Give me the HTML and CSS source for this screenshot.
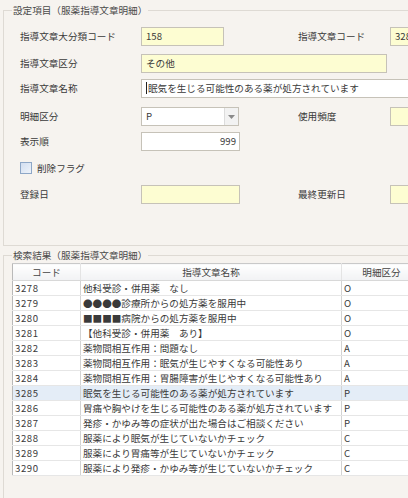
FILE: index.html
```html
<!DOCTYPE html>
<html lang="ja">
<head>
<meta charset="utf-8">
<link rel="stylesheet" href="styles.css">
</head>
<body>
<fieldset class="group group-detail">
  <legend>設定項目（服薬指導文章明細）</legend>
  <div class="form">
    <div class="lbl r1">指導文章大分類コード</div>
    <div class="tb ro w83 r1">158</div>
    <div class="lbl r1">指導文章コード</div>
    <div class="tb ro wide r1">3285</div>

    <div class="lbl r2">指導文章区分</div>
    <div class="tb ro w246 span r2">その他</div>

    <div class="lbl r3">指導文章名称</div>
    <div class="tb w280 span r3"><span class="caret"></span>眠気を生じる可能性のある薬が処方されています</div>

    <div class="lbl r4">明細区分</div>
    <div class="combo r4"><span class="combo-text">P</span><span class="combo-btn"><svg width="7" height="4" viewBox="0 0 7 4"><path d="M0 0H7L3.5 4Z" fill="#8a8a8a"/></svg></span></div>
    <div class="lbl r4">使用頻度</div>
    <div class="tb ro wide r4"></div>

    <div class="lbl r5">表示順</div>
    <div class="tb w99 num r5">999</div>

    <label class="chk r6"><span class="box"></span>削除フラグ</label>

    <div class="lbl r7">登録日</div>
    <div class="tb ro w99 r7"></div>
    <div class="lbl r7">最終更新日</div>
    <div class="tb ro wide r7"></div>
  </div>
</fieldset>

<fieldset class="group group-result">
  <legend>検索結果（服薬指導文章明細）</legend>
  <table class="grid">
    <colgroup><col class="c1"><col class="c2"><col class="c3"></colgroup>
    <thead>
      <tr><th>コード</th><th>指導文章名称</th><th>明細区分</th></tr>
    </thead>
    <tbody>
      <tr><td>3278</td><td>他科受診・併用薬　なし</td><td>O</td></tr>
      <tr><td>3279</td><td>●●●●診療所からの処方薬を服用中</td><td>O</td></tr>
      <tr><td>3280</td><td>■■■■病院からの処方薬を服用中</td><td>O</td></tr>
      <tr><td>3281</td><td>【他科受診・併用薬　あり】</td><td>O</td></tr>
      <tr><td>3282</td><td>薬物間相互作用：問題なし</td><td>A</td></tr>
      <tr><td>3283</td><td>薬物間相互作用：眠気が生じやすくなる可能性あり</td><td>A</td></tr>
      <tr><td>3284</td><td>薬物間相互作用：胃腸障害が生じやすくなる可能性あり</td><td>A</td></tr>
      <tr class="sel"><td>3285</td><td>眠気を生じる可能性のある薬が処方されています</td><td>P</td></tr>
      <tr><td>3286</td><td>胃痛や胸やけを生じる可能性のある薬が処方されています</td><td>P</td></tr>
      <tr><td>3287</td><td>発疹・かゆみ等の症状が出た場合はご相談ください</td><td>P</td></tr>
      <tr><td>3288</td><td>服薬により眠気が生じていないかチェック</td><td>C</td></tr>
      <tr><td>3289</td><td>服薬により胃痛等が生じていないかチェック</td><td>C</td></tr>
      <tr><td>3290</td><td>服薬により発疹・かゆみ等が生じていないかチェック</td><td>C</td></tr>
    </tbody>
  </table>
</fieldset>
</body>
</html>
```

FILE: styles.css
```css
html, body {
  margin: 0;
  padding: 0;
  width: 408px;
  height: 498px;
  overflow: hidden;
  background: #f6f3ef;
}
body {
  padding-top: 3px;
  box-sizing: border-box;
  font-family: "Noto Sans CJK JP", "Noto Sans", sans-serif;
  font-size: 9.6px;
  color: #3a3a3a;
}
.group {
  margin: 0 0 0 3px;
  padding: 0;
  border: 1px solid #dedad4;
  width: 430px;
  box-sizing: border-box;
  min-width: 0;
}
.group legend {
  margin-left: 8px;
  padding: 0 1px;
  height: 14px;
  line-height: 14px;
  color: #4a4a4a;
}
.group-detail {
  height: 243px;
}
.group-result {
  margin-top: 2px;
  height: 260px;
}
.form {
  display: grid;
  grid-template-columns: 121px 157px 92px 1fr;
  grid-template-rows: 27px 25px 28px 25px 26px 27px 19px;
  margin-top: 10px;
  padding-left: 16px;
}
.r1 { grid-row: 1; }
.r2 { grid-row: 2; }
.r3 { grid-row: 3; }
.r4 { grid-row: 4; }
.r5 { grid-row: 5; }
.r6 { grid-row: 6; }
.r7 { grid-row: 7; }
.lbl {
  height: 19px;
  line-height: 19px;
  white-space: nowrap;
}
.tb {
  height: 19px;
  box-sizing: border-box;
  border: 1px solid #c6c2b8;
  background: #fff;
  line-height: 17px;
  padding: 0 4px;
  white-space: nowrap;
  overflow: hidden;
}
.tb.ro { background: #fdfdd2; }
.w83 { width: 83px; }
.w99 { width: 99px; }
.w246 { width: 246px; }
.w280 { width: 280px; }
.wide { width: 60px; }
.span { grid-column: 2 / 5; }
.num { text-align: right; padding-right: 3px; }
.caret {
  display: inline-block;
  width: 1px;
  height: 12px;
  background: #222;
  vertical-align: -2px;
  margin-right: 1px;
}
.combo {
  width: 98px;
  height: 19px;
  box-sizing: border-box;
  border: 1px solid #c6c2b8;
  background: #fff;
  display: flex;
}
.combo-text {
  flex: 1;
  line-height: 17px;
  padding-left: 4px;
}
.combo-btn {
  width: 13px;
  border-left: 1px solid #dcdcdc;
  background: #f2f2f2;
  display: flex;
  align-items: center;
  justify-content: center;
}
.chk {
  grid-column: 1 / 3;
  display: flex;
  align-items: center;
  height: 19px;
  gap: 5px;
}
.chk .box {
  width: 10px;
  height: 10px;
  border: 1px solid #8ea7c7;
  background: linear-gradient(135deg, #d2def0, #eef3fa);
}
.grid {
  margin-left: 8px;
  margin-top: 1px;
  border-collapse: collapse;
  table-layout: fixed;
  width: 409px;
  background: #fff;
  border-left: 1px solid #b9b9b9;
  border-top: 1px solid #c9c9c9;
}
.c1 { width: 68px; }
.c2 { width: 261px; }
.c3 { width: 80px; }
.grid th {
  height: 16px;
  padding: 0;
  font-weight: normal;
  text-align: center;
  color: #444;
  background: linear-gradient(#ffffff, #f1f2f4);
  border-bottom: 1px solid #d8d8d8;
  border-right: 1px solid #e4e4e4;
}
.grid td {
  height: 14px;
  padding: 0 0 0 2px;
  line-height: 14px;
  white-space: nowrap;
  overflow: hidden;
  border-bottom: 1px solid #e6e6e6;
  border-right: 1px solid #d3d3d3;
}
.grid td:first-child { letter-spacing: 0.6px; }
.grid tr.sel td { background: #e4edf7; }
```
